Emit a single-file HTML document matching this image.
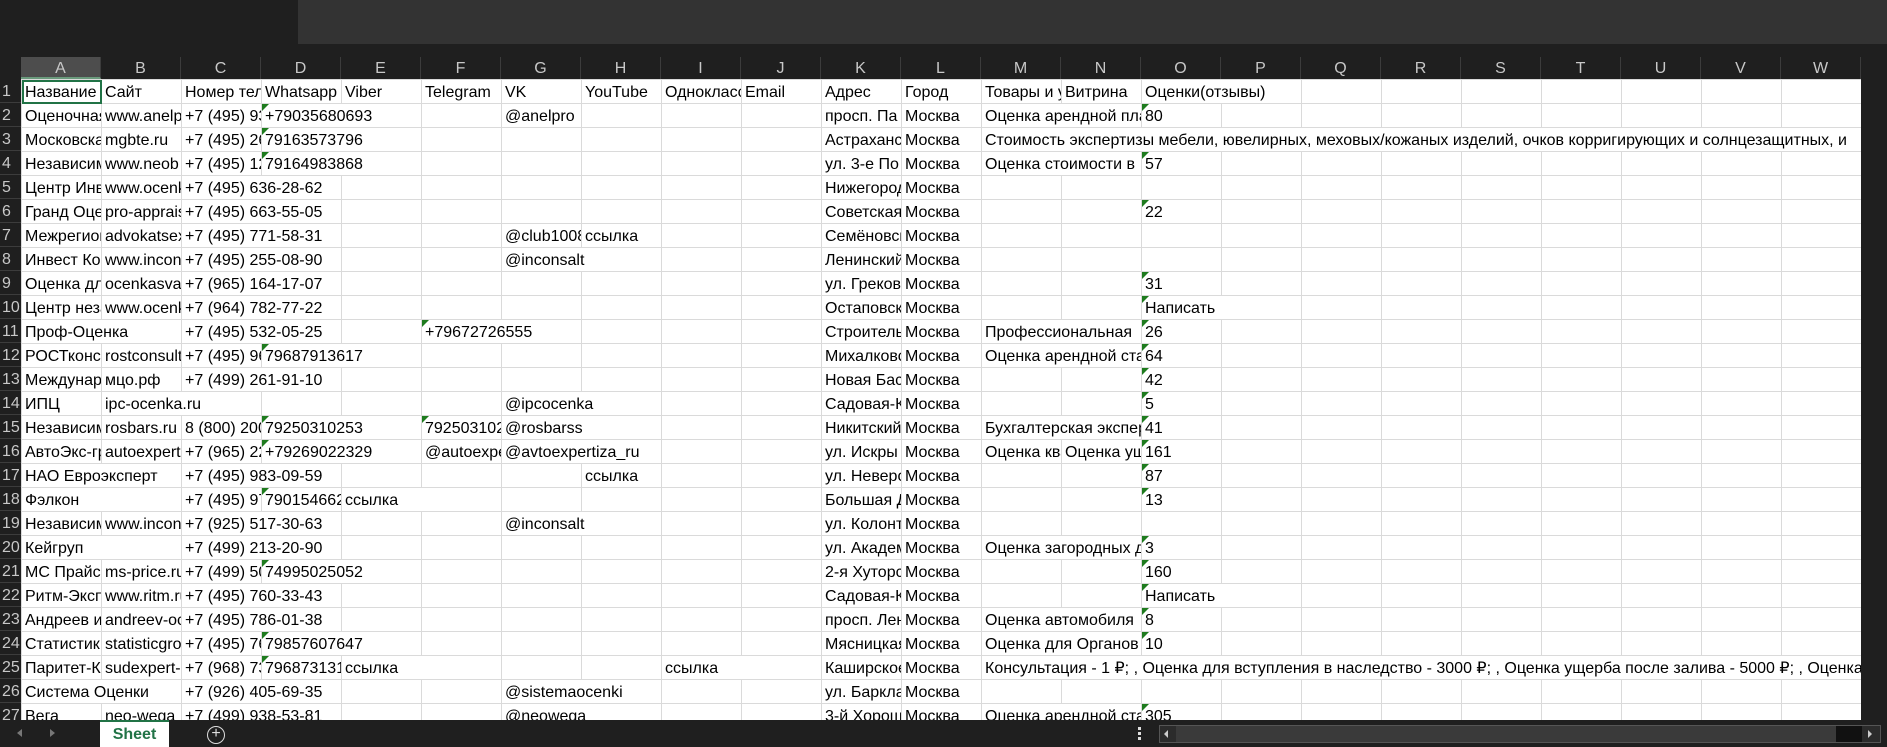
<!DOCTYPE html>
<html><head><meta charset="utf-8">
<style>
*{margin:0;padding:0;box-sizing:border-box}
body{width:1887px;height:747px;background:#1f1f1f;overflow:hidden;position:relative;font-family:"Liberation Sans","DejaVu Sans",sans-serif}
#topbox{position:absolute;left:298px;top:0;width:1589px;height:44px;background:#333333}
#colh{position:absolute;left:0;top:57px;height:22px;width:1887px;background:#1f1f1f}
.ch{position:absolute;top:0;height:22px;width:80px;border-right:1px solid #3c3c3c;color:#c8c8c8;font-size:16px;text-align:center;line-height:23px}
.ch.sel{background:#4d4d4d;border-bottom:2px solid #6a9a7c}
#corner{position:absolute;left:0;top:57px;width:21px;height:22px;border-right:1px solid #3c3c3c}
#corner:after{content:"";position:absolute;right:3px;bottom:3px;border-left:12px solid transparent;border-bottom:12px solid #4a4a4a}
.rn{position:absolute;left:0;width:21px;height:24px;color:#c8c8c8;font-size:16px;line-height:26px;padding-left:2px;border-bottom:1px solid #3c3c3c;overflow:hidden}
#grid{position:absolute;left:21px;top:79px;width:1840px;height:641px;background:#fff;overflow:hidden}
table{border-collapse:collapse;table-layout:fixed;width:1840px}
td{height:24px;border:1px solid #dadada;white-space:nowrap;overflow:hidden;font-size:16px;color:#000;padding:3px 2px 0 3px;line-height:20px;position:relative;vertical-align:bottom}
td.t:before{content:"";position:absolute;left:0;top:0;border-top:7px solid #1e7b1e;border-right:7px solid transparent}
td.sel{outline:2px solid #217346;outline-offset:-2px}
#vs{position:absolute;left:1861px;top:57px;width:26px;height:663px;background:#1f1f1f}
#tabbar{position:absolute;left:0;top:720px;width:1887px;height:27px;background:#1f1f1f}
#tab{position:absolute;left:100px;top:0;width:69px;height:27px;background:#fff;color:#217346;font-weight:bold;font-size:16px;text-align:center;line-height:25px;border-top:2px solid #217346}
#plus{position:absolute;left:207px;top:6px;width:18px;height:18px;border:1.5px solid #ddd;border-radius:50%;color:#ddd;font-size:16px;line-height:14px;text-align:center}
.arr{position:absolute;top:9px;width:0;height:0;border-top:4px solid transparent;border-bottom:4px solid transparent}
#hs{position:absolute;left:1159px;top:5px;width:722px;height:18px;background:#2b2b2b;border:1px solid #555}
#hs .thumb{position:absolute;left:16px;top:0;width:660px;height:16px;background:#3a3a3a}
#hs .blk{position:absolute;left:676px;top:0;width:26px;height:16px;background:#111}
</style></head><body>
<div id="topbox"></div>
<div id="corner"></div>
<div id="colh">
<div class="ch sel" style="left:21px">A</div><div class="ch" style="left:101px">B</div><div class="ch" style="left:181px">C</div><div class="ch" style="left:261px">D</div><div class="ch" style="left:341px">E</div><div class="ch" style="left:421px">F</div><div class="ch" style="left:501px">G</div><div class="ch" style="left:581px">H</div><div class="ch" style="left:661px">I</div><div class="ch" style="left:741px">J</div><div class="ch" style="left:821px">K</div><div class="ch" style="left:901px">L</div><div class="ch" style="left:981px">M</div><div class="ch" style="left:1061px">N</div><div class="ch" style="left:1141px">O</div><div class="ch" style="left:1221px">P</div><div class="ch" style="left:1301px">Q</div><div class="ch" style="left:1381px">R</div><div class="ch" style="left:1461px">S</div><div class="ch" style="left:1541px">T</div><div class="ch" style="left:1621px">U</div><div class="ch" style="left:1701px">V</div><div class="ch" style="left:1781px">W</div>
</div>
<div class="rn" style="top:79px">1</div><div class="rn" style="top:103px">2</div><div class="rn" style="top:127px">3</div><div class="rn" style="top:151px">4</div><div class="rn" style="top:175px">5</div><div class="rn" style="top:199px">6</div><div class="rn" style="top:223px">7</div><div class="rn" style="top:247px">8</div><div class="rn" style="top:271px">9</div><div class="rn" style="top:295px">10</div><div class="rn" style="top:319px">11</div><div class="rn" style="top:343px">12</div><div class="rn" style="top:367px">13</div><div class="rn" style="top:391px">14</div><div class="rn" style="top:415px">15</div><div class="rn" style="top:439px">16</div><div class="rn" style="top:463px">17</div><div class="rn" style="top:487px">18</div><div class="rn" style="top:511px">19</div><div class="rn" style="top:535px">20</div><div class="rn" style="top:559px">21</div><div class="rn" style="top:583px">22</div><div class="rn" style="top:607px">23</div><div class="rn" style="top:631px">24</div><div class="rn" style="top:655px">25</div><div class="rn" style="top:679px">26</div><div class="rn" style="top:703px">27</div>
<div id="grid"><table>
<colgroup><col style="width:80px"><col style="width:80px"><col style="width:80px"><col style="width:80px"><col style="width:80px"><col style="width:80px"><col style="width:80px"><col style="width:80px"><col style="width:80px"><col style="width:80px"><col style="width:80px"><col style="width:80px"><col style="width:80px"><col style="width:80px"><col style="width:80px"><col style="width:80px"><col style="width:80px"><col style="width:80px"><col style="width:80px"><col style="width:80px"><col style="width:80px"><col style="width:80px"><col style="width:80px"></colgroup>
<tr><td class="sel">Название</td><td>Сайт</td><td>Номер телефона</td><td>Whatsapp</td><td>Viber</td><td>Telegram</td><td>VK</td><td>YouTube</td><td>Одноклассники</td><td>Email</td><td>Адрес</td><td>Город</td><td>Товары и услуги</td><td>Витрина</td><td colspan="2">Оценки(отзывы)</td><td></td><td></td><td></td><td></td><td></td><td></td><td></td></tr>
<tr><td>Оценочная</td><td>www.anelpro</td><td>+7 (495) 933</td><td class="t" colspan="2">+79035680693</td><td></td><td>@anelpro</td><td></td><td></td><td></td><td>просп. Па</td><td>Москва</td><td colspan="2">Оценка арендной платы</td><td class="t">80</td><td></td><td></td><td></td><td></td><td></td><td></td><td></td><td></td></tr>
<tr><td>Московская</td><td>mgbte.ru</td><td>+7 (495) 266</td><td class="t" colspan="2">79163573796</td><td></td><td></td><td></td><td></td><td></td><td>Астраханский</td><td>Москва</td><td colspan="11">Стоимость экспертизы мебели, ювелирных, меховых/кожаных изделий, очков корригирующих и солнцезащитных, и</td></tr>
<tr><td>Независимая</td><td>www.neob</td><td>+7 (495) 12</td><td class="t" colspan="2">79164983868</td><td></td><td></td><td></td><td></td><td></td><td>ул. 3-е По</td><td>Москва</td><td colspan="2">Оценка стоимости в</td><td class="t">57</td><td></td><td></td><td></td><td></td><td></td><td></td><td></td><td></td></tr>
<tr><td>Центр Инвест</td><td>www.ocenka</td><td colspan="2">+7 (495) 636-28-62</td><td></td><td></td><td></td><td></td><td></td><td></td><td>Нижегородская</td><td>Москва</td><td></td><td></td><td></td><td></td><td></td><td></td><td></td><td></td><td></td><td></td></tr>
<tr><td>Гранд Оценка</td><td>pro-appraisal</td><td colspan="2">+7 (495) 663-55-05</td><td></td><td></td><td></td><td></td><td></td><td></td><td>Советская</td><td>Москва</td><td></td><td></td><td class="t">22</td><td></td><td></td><td></td><td></td><td></td><td></td><td></td><td></td></tr>
<tr><td>Межрегиональный</td><td>advokatsexp</td><td colspan="2">+7 (495) 771-58-31</td><td></td><td></td><td>@club100811</td><td>ссылка</td><td></td><td></td><td>Семёновская</td><td>Москва</td><td></td><td></td><td></td><td></td><td></td><td></td><td></td><td></td><td></td><td></td><td></td></tr>
<tr><td>Инвест Консалт</td><td>www.inconsalt</td><td colspan="2">+7 (495) 255-08-90</td><td></td><td></td><td colspan="2">@inconsalt</td><td></td><td></td><td>Ленинский</td><td>Москва</td><td></td><td></td><td></td><td></td><td></td><td></td><td></td><td></td><td></td><td></td><td></td></tr>
<tr><td>Оценка для</td><td>ocenkasvao</td><td colspan="2">+7 (965) 164-17-07</td><td></td><td></td><td></td><td></td><td></td><td></td><td>ул. Грекова</td><td>Москва</td><td></td><td></td><td class="t">31</td><td></td><td></td><td></td><td></td><td></td><td></td><td></td><td></td></tr>
<tr><td>Центр независимой</td><td>www.ocenka</td><td colspan="2">+7 (964) 782-77-22</td><td></td><td></td><td></td><td></td><td></td><td></td><td>Остаповский</td><td>Москва</td><td></td><td></td><td class="t" colspan="2">Написать</td><td></td><td></td><td></td><td></td><td></td><td></td><td></td></tr>
<tr><td colspan="2">Проф-Оценка</td><td colspan="2">+7 (495) 532-05-25</td><td></td><td class="t" colspan="2">+79672726555</td><td></td><td></td><td></td><td>Строительный</td><td>Москва</td><td colspan="2">Профессиональная</td><td class="t">26</td><td></td><td></td><td></td><td></td><td></td><td></td><td></td><td></td></tr>
<tr><td>РОСТконсалт</td><td>rostconsult</td><td>+7 (495) 960</td><td class="t" colspan="2">79687913617</td><td></td><td></td><td></td><td></td><td></td><td>Михалковская</td><td>Москва</td><td colspan="2">Оценка арендной ставки</td><td class="t">64</td><td></td><td></td><td></td><td></td><td></td><td></td><td></td><td></td></tr>
<tr><td>Международный</td><td>мцо.рф</td><td colspan="2">+7 (499) 261-91-10</td><td></td><td></td><td></td><td></td><td></td><td></td><td>Новая Басманная</td><td>Москва</td><td></td><td></td><td class="t">42</td><td></td><td></td><td></td><td></td><td></td><td></td><td></td><td></td></tr>
<tr><td>ИПЦ</td><td colspan="2">ipc-ocenka.ru</td><td></td><td></td><td></td><td colspan="2">@ipcocenka</td><td></td><td></td><td>Садовая-Кудринская</td><td>Москва</td><td></td><td></td><td class="t">5</td><td></td><td></td><td></td><td></td><td></td><td></td><td></td><td></td></tr>
<tr><td>Независимая</td><td>rosbars.ru</td><td>8 (800) 200</td><td class="t" colspan="2">79250310253</td><td class="t">79250310253</td><td colspan="2">@rosbarss</td><td></td><td></td><td>Никитский</td><td>Москва</td><td colspan="2">Бухгалтерская экспертиза</td><td class="t">41</td><td></td><td></td><td></td><td></td><td></td><td></td><td></td><td></td></tr>
<tr><td>АвтоЭкс-групп</td><td>autoexpertiza</td><td>+7 (965) 22</td><td class="t" colspan="2">+79269022329</td><td>@autoexpertiza</td><td colspan="2">@avtoexpertiza_ru</td><td></td><td></td><td>ул. Искры</td><td>Москва</td><td>Оценка квартиры</td><td>Оценка ущерба</td><td class="t">161</td><td></td><td></td><td></td><td></td><td></td><td></td><td></td><td></td></tr>
<tr><td colspan="2">НАО Евроэксперт</td><td colspan="2">+7 (495) 983-09-59</td><td></td><td></td><td></td><td>ссылка</td><td></td><td></td><td>ул. Неверовского</td><td>Москва</td><td></td><td></td><td class="t">87</td><td></td><td></td><td></td><td></td><td></td><td></td><td></td><td></td></tr>
<tr><td colspan="2">Фэлкон</td><td>+7 (495) 970</td><td class="t">79015466200</td><td colspan="2">ссылка</td><td></td><td></td><td></td><td></td><td>Большая Дмитровка</td><td>Москва</td><td></td><td></td><td class="t">13</td><td></td><td></td><td></td><td></td><td></td><td></td><td></td><td></td></tr>
<tr><td>Независимая</td><td>www.inconsalt</td><td colspan="2">+7 (925) 517-30-63</td><td></td><td></td><td colspan="2">@inconsalt</td><td></td><td></td><td>ул. Колонтай</td><td>Москва</td><td></td><td></td><td></td><td></td><td></td><td></td><td></td><td></td><td></td><td></td><td></td></tr>
<tr><td colspan="2">Кейгруп</td><td colspan="2">+7 (499) 213-20-90</td><td></td><td></td><td></td><td></td><td></td><td></td><td>ул. Академика</td><td>Москва</td><td colspan="2">Оценка загородных домов</td><td class="t">3</td><td></td><td></td><td></td><td></td><td></td><td></td><td></td><td></td></tr>
<tr><td>МС Прайс</td><td>ms-price.ru</td><td>+7 (499) 502</td><td class="t" colspan="2">74995025052</td><td></td><td></td><td></td><td></td><td></td><td>2-я Хуторская</td><td>Москва</td><td></td><td></td><td class="t">160</td><td></td><td></td><td></td><td></td><td></td><td></td><td></td><td></td></tr>
<tr><td>Ритм-Эксперт</td><td>www.ritm.ru</td><td colspan="2">+7 (495) 760-33-43</td><td></td><td></td><td></td><td></td><td></td><td></td><td>Садовая-Кудринская</td><td>Москва</td><td></td><td></td><td class="t" colspan="2">Написать</td><td></td><td></td><td></td><td></td><td></td><td></td><td></td></tr>
<tr><td>Андреев и партнеры</td><td>andreev-ocenka</td><td colspan="2">+7 (495) 786-01-38</td><td></td><td></td><td></td><td></td><td></td><td></td><td>просп. Ленинский</td><td>Москва</td><td colspan="2">Оценка автомобиля</td><td class="t">8</td><td></td><td></td><td></td><td></td><td></td><td></td><td></td><td></td></tr>
<tr><td>Статистик</td><td>statisticgroup</td><td>+7 (495) 760</td><td class="t" colspan="2">79857607647</td><td></td><td></td><td></td><td></td><td></td><td>Мясницкая</td><td>Москва</td><td colspan="2">Оценка для Органов</td><td class="t">10</td><td></td><td></td><td></td><td></td><td></td><td></td><td></td><td></td></tr>
<tr><td>Паритет-К</td><td>sudexpert-k</td><td>+7 (968) 731</td><td class="t">79687313131</td><td colspan="2">ссылка</td><td></td><td></td><td colspan="2">ссылка</td><td>Каширское</td><td>Москва</td><td colspan="11">Консультация - 1 ₽; , Оценка для вступления в наследство - 3000 ₽; , Оценка ущерба после залива - 5000 ₽; , Оценка</td></tr>
<tr><td colspan="2">Система Оценки</td><td colspan="2">+7 (926) 405-69-35</td><td></td><td></td><td colspan="2">@sistemaocenki</td><td></td><td></td><td>ул. Барклая</td><td>Москва</td><td></td><td></td><td></td><td></td><td></td><td></td><td></td><td></td><td></td><td></td><td></td></tr>
<tr><td>Вега</td><td>neo-wega</td><td colspan="2">+7 (499) 938-53-81</td><td></td><td></td><td colspan="2">@neowega</td><td></td><td></td><td>3-й Хорошёвский</td><td>Москва</td><td colspan="2">Оценка арендной ставки</td><td class="t">305</td><td></td><td></td><td></td><td></td><td></td><td></td><td></td><td></td></tr>
</table></div>
<div id="vs"></div>
<div id="tabbar">
<div class="arr" style="left:17px;border-right:5px solid #777"></div>
<div class="arr" style="left:50px;border-left:5px solid #777"></div>
<div id="tab">Sheet</div>
<div id="plus">+</div>
<div style="position:absolute;left:1138px;top:7px;width:3px;height:3px;background:#ddd;box-shadow:0 5px 0 #ddd,0 10px 0 #ddd"></div>
<div id="hs"><div class="arr" style="left:4px;top:4px;border-right:4px solid #ccc"></div><div class="thumb"></div><div class="blk"></div><div class="arr" style="left:708px;top:4px;border-left:4px solid #ccc"></div></div>
</div>
</body></html>
